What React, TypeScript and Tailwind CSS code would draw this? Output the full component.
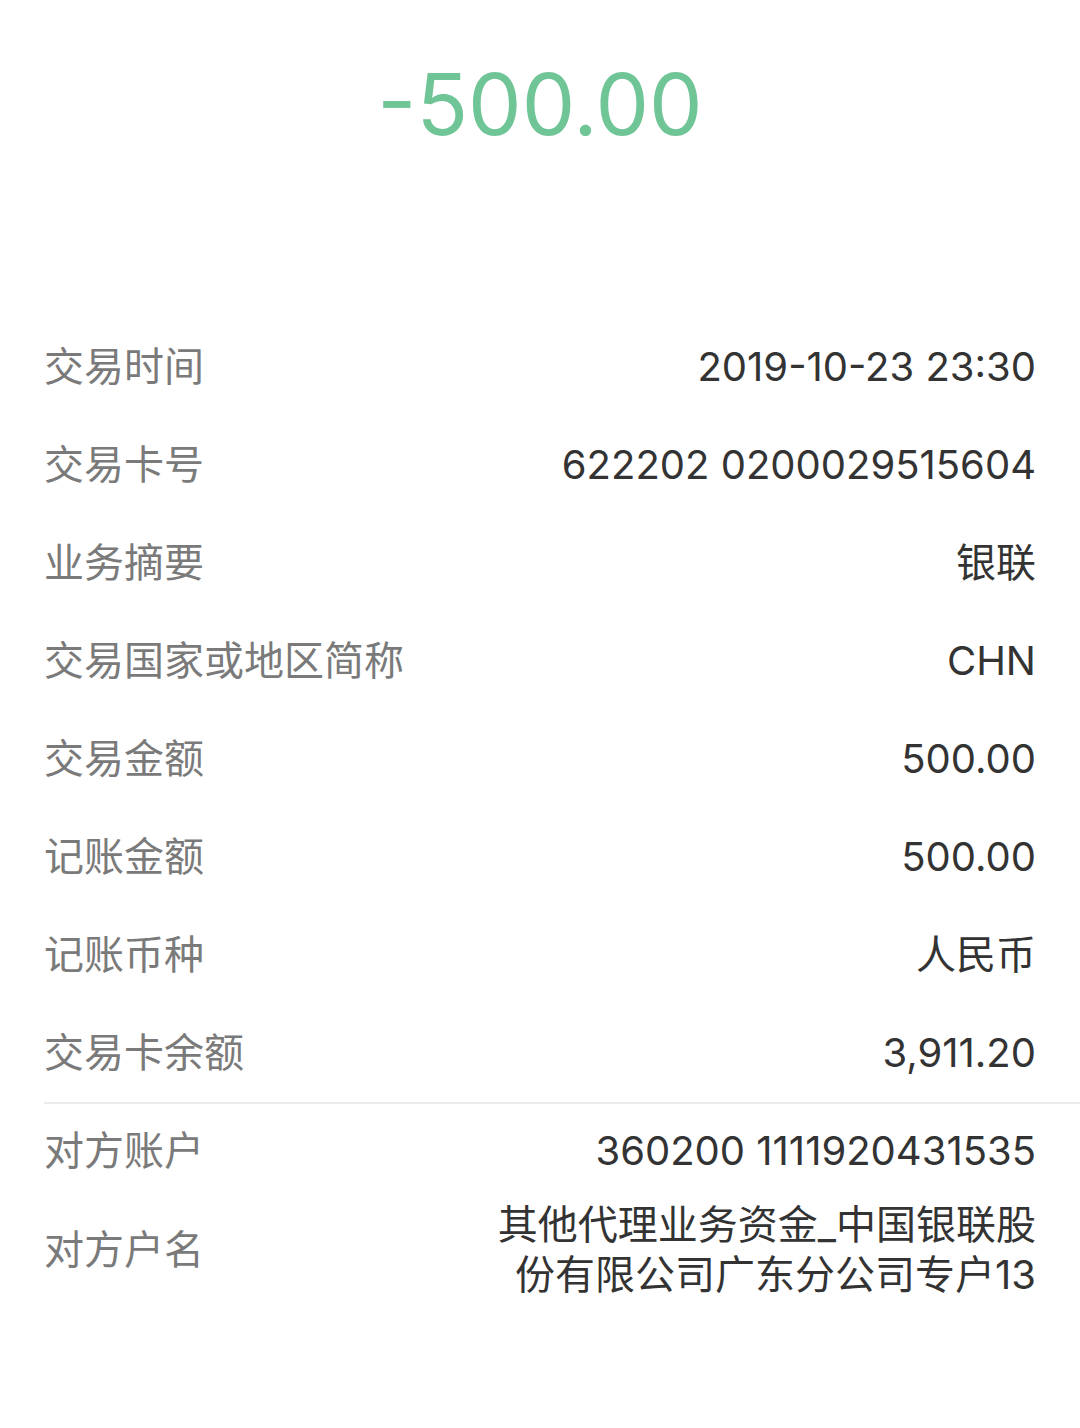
import React from "react";

type Row = { label: string; value: string };

const ROWS: Row[] = [
  { label: "交易时间", value: "2019-10-23 23:30" },
  { label: "交易卡号", value: "622202 0200029515604" },
  { label: "业务摘要", value: "银联" },
  { label: "交易国家或地区简称", value: "CHN" },
  { label: "交易金额", value: "500.00" },
  { label: "记账金额", value: "500.00" },
  { label: "记账币种", value: "人民币" },
  { label: "交易卡余额", value: "3,911.20" },
];

const COUNTERPARTY: Row[] = [
  { label: "对方账户", value: "360200 1111920431535" },
  { label: "对方户名", value: "其他代理业务资金_中国银联股份有限公司广东分公司专户13" },
];

const FONT = "font-['Inter','Noto_Sans_CJK_SC',sans-serif]";

function DetailRow({ label, value }: Row) {
  return (
    <div className="flex items-center justify-between min-h-[98px] pl-[44px] pr-[44px] gap-10">
      <span className="shrink-0 text-[40px] leading-[50px] text-[#7a7a7a]">{label}</span>
      <span className="max-w-[552px] text-right text-[40px] leading-[50px] text-[#333333]">{value}</span>
    </div>
  );
}

export default function App() {
  return (
    <div className={`w-[1080px] h-[1428px] bg-white ${FONT}`}>
      {/* Amount header */}
      <div className="h-[318px] pt-[62px] flex justify-center">
        <span className="text-[85px] leading-[85px] text-[#6fc596]">-500.00</span>
      </div>

      {ROWS.map((r) => (
        <DetailRow key={r.label} {...r} />
      ))}

      <div className="ml-[44px] h-[2px] bg-[#ebebeb]" />

      <div className="-mt-[2px]">
        {COUNTERPARTY.map((r) => (
          <DetailRow key={r.label} {...r} />
        ))}
      </div>
    </div>
  );
}
